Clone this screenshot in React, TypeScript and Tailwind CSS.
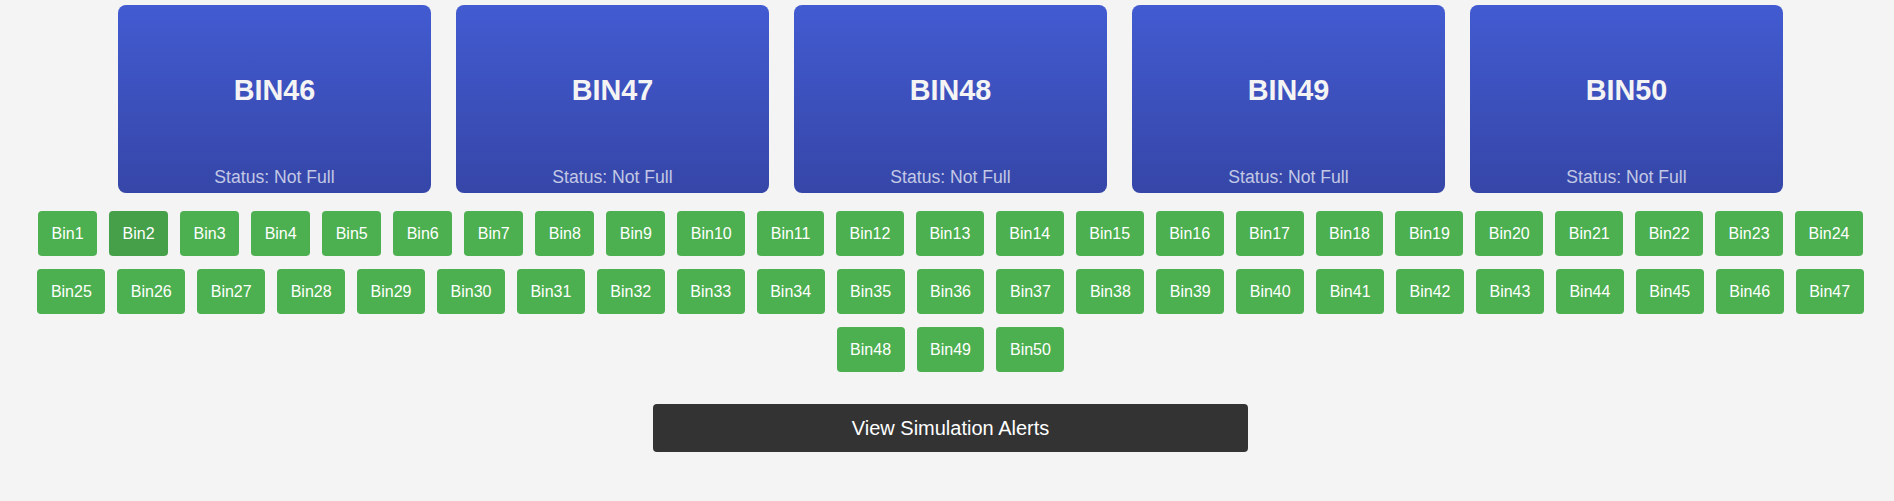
import React from "react";

const cards = [46, 47, 48, 49, 50];
const bins = Array.from({ length: 50 }, (_, i) => i + 1);

export default function App() {
  return (
    <div
      className="min-h-[501px] w-full bg-[#f4f4f4] pl-[7px] pt-[5px]"
      style={{ fontFamily: '"Liberation Sans", Arial, sans-serif' }}
    >
      <div className="flex justify-center gap-[25px]">
        {cards.map((n) => (
          <div
            key={n}
            className="flex h-[188px] w-[313px] flex-col rounded-[8px] bg-gradient-to-b from-[#425bd1] to-[#3646a8] text-center"
          >
            <div className="flex flex-1 items-center justify-center pt-[12px]">
              <span className="text-[28.8px] font-bold text-[#f4f4f4]">BIN{n}</span>
            </div>
            <div className="pb-[3px] text-[17.6px] text-[#c3c8e5]">Status: Not Full</div>
          </div>
        ))}
      </div>

      <div className="mx-auto mt-[18px] flex w-[1860px] flex-wrap justify-center gap-x-[12px] gap-y-[13px]">
        {bins.map((n) => (
          <div
            key={n}
            className={
              "flex h-[45px] items-center rounded-[4px] px-[13.5px] text-[16px] text-white " +
              (n === 2 ? "bg-[#45a049]" : "bg-[#4caf50]")
            }
          >
            Bin{n}
          </div>
        ))}
      </div>

      <div className="mt-[32px] flex justify-center">
        <button className="flex h-[48px] w-[595px] items-center justify-center rounded-[4px] bg-[#333333] text-[20px] text-white">
          View Simulation Alerts
        </button>
      </div>
    </div>
  );
}
